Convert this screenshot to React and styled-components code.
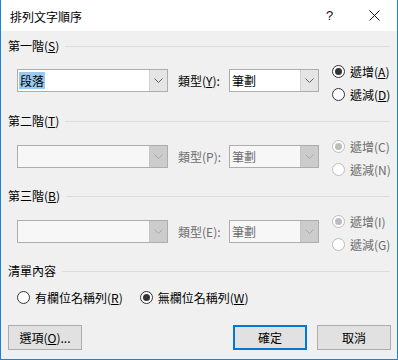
import styled, { createGlobalStyle } from "styled-components";

const Global = createGlobalStyle`
  html, body { margin: 0; padding: 0; background: #f0f0f0; }
  body {
    font-family: "Noto Sans CJK TC", "Noto Sans", "Liberation Sans", sans-serif;
    font-size: 12px;
    color: #000;
    white-space: nowrap;
  }
`;

const Window = styled.div`
  width: 398px;
  height: 360px;
  box-sizing: border-box;
  border: 1px solid #1883d7;
  border-top: none;
  background: #f0f0f0;
  display: flex;
  flex-direction: column;
  overflow: hidden;
`;

const TitleBar = styled.div`
  height: 31px;
  background: #fff;
  display: flex;
  align-items: center;
  padding-left: 9px;
  font-size: 12px;
`;

const Title = styled.div`
  flex: 1;
  padding-top: 1px;
`;

const CaptionButton = styled.div`
  width: 45px;
  height: 31px;
  display: flex;
  align-items: center;
  justify-content: center;
  font-family: "Liberation Sans", sans-serif;
  font-size: 13px;
  color: #111;
`;

const Body = styled.div`
  padding: 7px 7px 0 7px;
  display: flex;
  flex-direction: column;
`;

const Header = styled.div`
  height: 16px;
  display: flex;
  align-items: center;
  gap: 6px;
  line-height: 16px;
  &::after {
    content: "";
    flex: 1;
    height: 1px;
    background: #dcdcdc;
  }
`;

const Section = styled.div`
  margin-bottom: 7px;
`;

const Row = styled.div`
  margin-top: 6px;
  height: 46px;
  display: flex;
  align-items: flex-start;
  padding-left: 9px;
`;

const Combo = styled.div`
  flex: none;
  margin-top: ${(p) => (p.$top ? p.$top : 9)}px;
  width: ${(p) => p.$w}px;
  height: 23px;
  box-sizing: border-box;
  border: 1px solid #adadad;
  background: ${(p) => (p.$disabled ? "#f7f7f7" : "#fff")};
  display: flex;
  align-items: stretch;
  color: ${(p) => (p.$disabled ? "#6d6d6d" : "#000")};
`;

const ComboText = styled.div`
  flex: 1;
  display: flex;
  align-items: center;
  padding-left: 1px;
  span {
    padding: 0 1px;
    line-height: 17px;
    background: ${(p) => (p.$selected ? "#99c9ef" : "transparent")};
  }
`;

const ComboButton = styled.div`
  width: 17px;
  background: ${(p) => (p.$disabled ? "#cccccc" : "#e5e5e5")};
  border-left: 1px solid ${(p) => (p.$disabled ? "#c4c4c4" : "#d0d0d0")};
  display: flex;
  align-items: center;
  justify-content: center;
`;

const TypeLabel = styled.div`
  flex: none;
  width: 51px;
  margin-left: 10px;
  height: 23px;
  line-height: 23px;
  color: ${(p) => (p.$disabled ? "#6d6d6d" : "#000")};
`;

const RadioCol = styled.div`
  flex: none;
  margin-left: 13px;
  display: flex;
  flex-direction: column;
`;

const RadioItem = styled.div`
  flex: none;
  height: ${(p) => (p.$h ? p.$h : 23)}px;
  display: flex;
  align-items: center;
  gap: 5px;
  color: ${(p) => (p.$disabled ? "#6d6d6d" : "#000")};
`;

const Circle = styled.div`
  flex: none;
  width: 13px;
  height: 13px;
  box-sizing: border-box;
  border-radius: 50%;
  border: 1px solid ${(p) => (p.$disabled ? "#bcbcbc" : "#333")};
  background: #fff;
  display: flex;
  align-items: center;
  justify-content: center;
  &::after {
    content: "";
    display: ${(p) => (p.$on ? "block" : "none")};
    width: 7px;
    height: 7px;
    border-radius: 50%;
    background: ${(p) => (p.$disabled ? "#bcbcbc" : "#333")};
  }
`;

const ListRow = styled.div`
  margin-top: 8px;
  height: 20px;
  display: flex;
  align-items: center;
  padding-left: 9px;
  gap: 17px;
`;

const Buttons = styled.div`
  margin-top: 18px;
  display: flex;
  align-items: center;
`;

const Button = styled.div`
  flex: none;
  width: 74px;
  height: 25px;
  box-sizing: border-box;
  border: ${(p) => (p.$default ? "2px solid #0078d7" : "1px solid #adadad")};
  background: #e1e1e1;
  display: flex;
  align-items: center;
  justify-content: center;
  margin-left: ${(p) => p.$ml || 0}px;
`;

const Chevron = ({ color }) => (
  <svg width="9" height="5" viewBox="0 0 9 5">
    <path d="M0.5 0.5 L4.5 4.5 L8.5 0.5" fill="none" stroke={color} strokeWidth="1" />
  </svg>
);

function Select({ w, text, selected, disabled, top }) {
  return (
    <Combo $w={w} $disabled={disabled} $top={top}>
      <ComboText $selected={selected}>
        <span>{text}</span>
      </ComboText>
      <ComboButton $disabled={disabled}>
        <Chevron color={disabled ? "#a8a8a8" : "#606060"} />
      </ComboButton>
    </Combo>
  );
}

function Radio({ label, keyChar, on, disabled, h }) {
  return (
    <RadioItem $disabled={disabled} $h={h}>
      <Circle $on={on} $disabled={disabled} />
      <span>
        {label}({disabled ? keyChar : <u>{keyChar}</u>})
      </span>
    </RadioItem>
  );
}

function SortLevel({ title, k, first, typeKey, upKey, downKey, disabled, top }) {
  return (
    <Section>
      <Header>
        <span>
          {title}(<u>{k}</u>)
        </span>
      </Header>
      <Row>
        <Select w={151} text={first} selected={!disabled} disabled={disabled} top={top} />
        <TypeLabel $disabled={disabled} style={{ marginTop: top || 9 }}>
          類型({disabled ? typeKey : <u>{typeKey}</u>}):
        </TypeLabel>
        <Select w={90} text="筆劃" disabled={disabled} top={top} />
        <RadioCol>
          <Radio label="遞增" keyChar={upKey} on disabled={disabled} />
          <Radio label="遞減" keyChar={downKey} disabled={disabled} />
        </RadioCol>
      </Row>
    </Section>
  );
}

export default function App() {
  return (
    <>
      <Global />
      <Window>
        <TitleBar>
          <Title>排列文字順序</Title>
          <CaptionButton>?</CaptionButton>
          <CaptionButton>
            <svg width="11" height="11" viewBox="0 0 11 11">
              <path d="M0.5 0.5 L10.5 10.5 M10.5 0.5 L0.5 10.5" stroke="#111" strokeWidth="1" />
            </svg>
          </CaptionButton>
        </TitleBar>
        <Body>
          <SortLevel title="第一階" k="S" first="段落" typeKey="Y" upKey="A" downKey="D" />
          <SortLevel title="第二階" k="T" first="" typeKey="P" upKey="C" downKey="N" disabled top={10} />
          <SortLevel title="第三階" k="B" first="" typeKey="E" upKey="I" downKey="G" disabled top={10} />
          <Header>
            <span>清單內容</span>
          </Header>
          <ListRow>
            <Radio label="有欄位名稱列" keyChar="R" h={20} />
            <Radio label="無欄位名稱列" keyChar="W" on h={20} />
          </ListRow>
          <Buttons>
            <Button>
              選項(<u>O</u>)...
            </Button>
            <Button $default $ml={151}>確定</Button>
            <Button $ml={10}>取消</Button>
          </Buttons>
        </Body>
      </Window>
    </>
  );
}
